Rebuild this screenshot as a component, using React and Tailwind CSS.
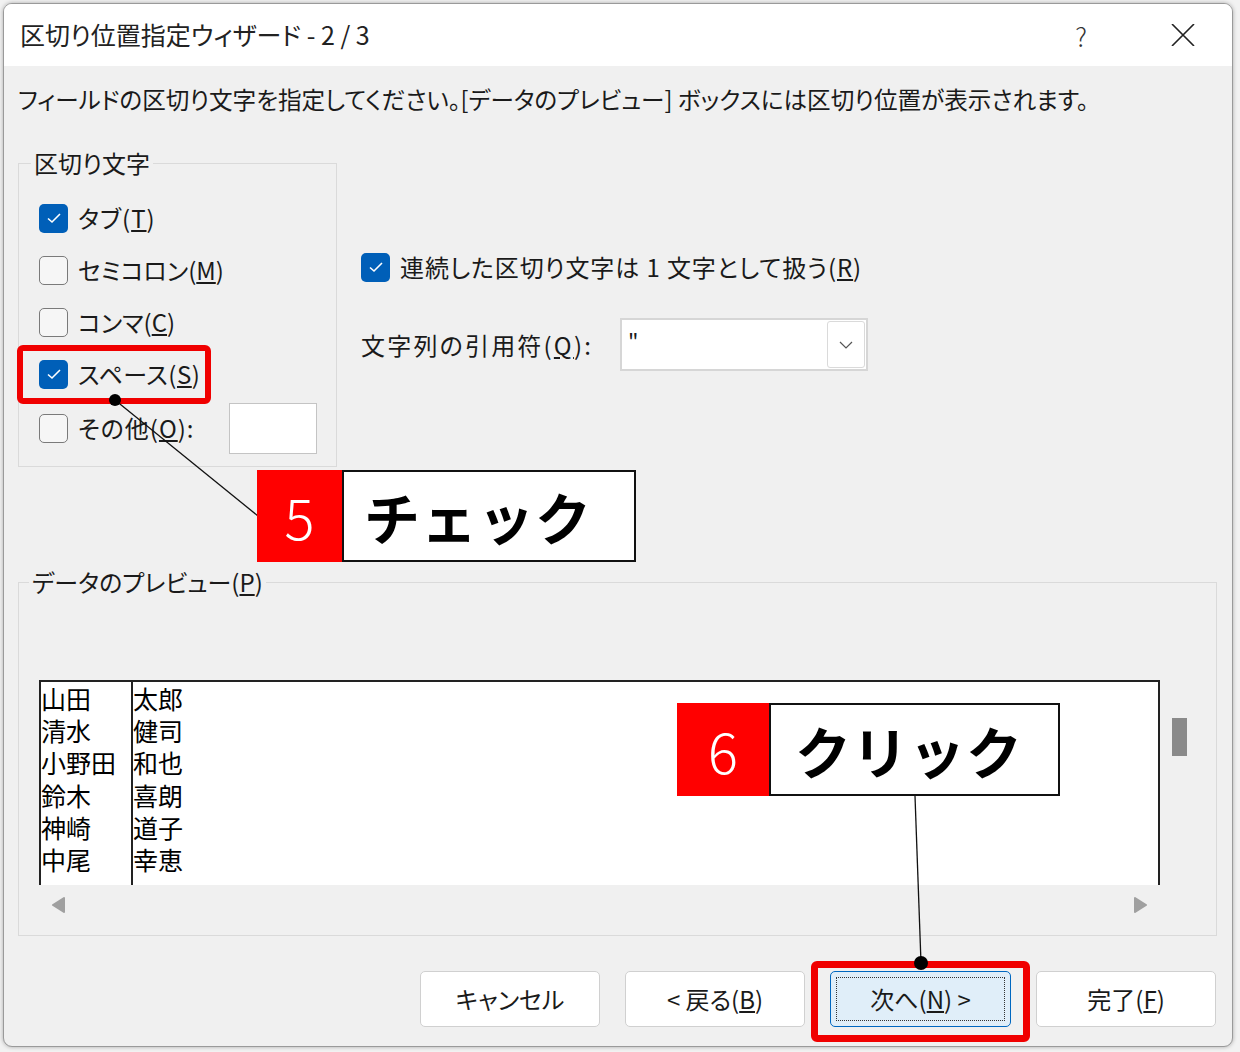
import React from "react";

const jp = "font-['Noto_Sans_CJK_JP',sans-serif] [font-feature-settings:'palt']";

function CheckBox({ checked }) {
  if (checked) {
    return (
      <span className="w-[29px] h-[29px] rounded-[5px] bg-[#005fb8] flex items-center justify-center shrink-0">
        <svg width="16" height="12" viewBox="0 0 16 12">
          <path d="M2 6.5 L6 10 L14 2" fill="none" stroke="white" strokeWidth="1.6" />
        </svg>
      </span>
    );
  }
  return <span className="w-[29px] h-[29px] rounded-[5px] border-[1.5px] border-[#7a7a7a] bg-[#f6f6f6] shrink-0" />;
}

function Row({ checked, children, h = "h-[52px]" }) {
  return (
    <div className={`${h} flex items-center gap-[10px] pl-[20px]`}>
      <CheckBox checked={checked} />
      {children}
    </div>
  );
}

const names = [
  ["山田", "太郎"],
  ["清水", "健司"],
  ["小野田", "和也"],
  ["鈴木", "喜朗"],
  ["神崎", "道子"],
  ["中尾", "幸恵"],
];

function Button({ children, primary }) {
  if (primary) {
    return (
      <div className="w-[181px] h-[56px] rounded-[5px] border border-[#0067c0] bg-[#e0eef9] p-[5px]">
        <div className="w-full h-full border border-dotted border-[#333] flex items-center justify-center text-[24px]">
          {children}
        </div>
      </div>
    );
  }
  return (
    <div className="w-[180px] h-[56px] rounded-[5px] border border-[#d0d0d0] bg-white flex items-center justify-center text-[24px]">
      {children}
    </div>
  );
}

export default function App() {
  return (
    <div className={`relative w-[1240px] h-[1052px] bg-[#f2f2f2] overflow-hidden text-[#1a1a1a] ${jp}`}>
      <div className="ml-[3px] mt-[3px] w-[1230px] h-[1044px] rounded-[9px] border border-[#9a9a9a] bg-[#f0f0f0] overflow-hidden flex flex-col shadow-[0_0_4px_rgba(0,0,0,0.3)]">
        {/* title bar */}
        <div className="h-[62px] bg-white flex items-center pl-[16px] pr-[37px] shrink-0">
          <span className="text-[25px] text-[#222]">区切り位置指定ウィザード - 2 / 3</span>
          <span className="ml-auto text-[26px] text-[#333] font-light">?</span>
          <svg className="ml-[84px]" width="24" height="22" viewBox="0 0 24 22">
            <path d="M1 0 L23 22 M23 0 L1 22" stroke="#222" strokeWidth="1.6" />
          </svg>
        </div>

        <div className="px-[14px]">
          <p className="pt-[16px] text-[23.6px] leading-[34px]">
            フィールドの区切り文字を指定してください。[データのプレビュー] ボックスには区切り位置が表示されます。
          </p>

          <div className="mt-[30px] flex">
            <fieldset className="w-[319px] border border-[#dadada]">
              <legend className="ml-[12px] px-[3px] text-[24px] leading-[34px]">区切り文字</legend>
              <div className="pt-[12px] pb-[10px] text-[24px]">
                <Row checked>
                  <span className="tracking-[1px]">タブ(<u>T</u>)</span>
                </Row>
                <Row>
                  <span>セミコロン(<u>M</u>)</span>
                </Row>
                <Row>
                  <span>コンマ(<u>C</u>)</span>
                </Row>
                <Row checked>
                  <span className="tracking-[0.5px]">スペース(<u>S</u>)</span>
                </Row>
                <Row h="h-[56px]">
                  <span className="w-[141px] tracking-[1px]">その他(<u>O</u>):</span>
                  <span className="w-[88px] h-[51px] bg-white border border-[#c4c4c4]" />
                </Row>
              </div>
            </fieldset>

            <div className="ml-[24px] pt-[101px] text-[24px]">
              <div className="h-[40px] flex items-center gap-[10px]">
                <CheckBox checked />
                <span className="tracking-[0.9px]">連続した区切り文字は 1 文字として扱う(<u>R</u>)</span>
              </div>
              <div className="mt-[31px] h-[53px] flex items-center">
                <span className="w-[259px] tracking-[2.2px]">文字列の引用符(<u>Q</u>):</span>
                <div className="w-[248px] h-[53px] bg-white border-2 border-[#d6d6d6] flex items-center">
                  <span className="pl-[6px] text-[22px] self-start mt-[4px]">"</span>
                  <div className="ml-auto mr-[1px] w-[38px] h-[47px] border border-[#dadada] rounded-[3px] flex items-center justify-center">
                    <svg width="14" height="8" viewBox="0 0 14 8">
                      <path d="M1 1 L7 7 L13 1" fill="none" stroke="#555" strokeWidth="1.2" />
                    </svg>
                  </div>
                </div>
              </div>
            </div>
          </div>

          {/* preview */}
          <fieldset className="mt-[98px] w-[1199px] border border-[#dadada]">
            <legend className="ml-[10px] px-[3px] text-[24px] leading-[34px]">データのプレビュー(<u>P</u>)</legend>
            <div className="mt-[81px] pl-[20px] pb-[11px] flex">
              <div className="w-[1121px]">
                <div className="h-[205px] bg-white border-t-2 border-l-2 border-r-2 border-[#222] flex text-[25px] leading-none text-black [font-feature-settings:normal]">
                  <div className="w-[92px] border-r-2 border-[#222]">
                    {names.map((n) => (
                      <div key={n[0]} className="h-[32.3px] flex items-center">{n[0]}</div>
                    ))}
                  </div>
                  <div>
                    {names.map((n) => (
                      <div key={n[1]} className="h-[32.3px] flex items-center">{n[1]}</div>
                    ))}
                  </div>
                </div>
                <div className="h-[39px] flex items-center justify-between pl-[12px] pr-[12px]">
                  <svg width="14" height="16" viewBox="0 0 14 16">
                    <path d="M13 1 L2 8 L13 15 Z" fill="#a0a0a0" stroke="#a0a0a0" strokeLinejoin="round" strokeWidth="2" />
                  </svg>
                  <svg width="14" height="16" viewBox="0 0 14 16">
                    <path d="M1 1 L12 8 L1 15 Z" fill="#a0a0a0" stroke="#a0a0a0" strokeLinejoin="round" strokeWidth="2" />
                  </svg>
                </div>
              </div>
              <div className="pl-[12px] pt-[38px]">
                <div className="w-[15px] h-[38px] bg-[#8a8a8a]" />
              </div>
            </div>
          </fieldset>

          <div className="mt-[35px] flex justify-end gap-[25px] pr-[2px]">
            <Button>キャンセル</Button>
            <Button>
              &lt; 戻る(<u>B</u>)
            </Button>
            <Button primary>
              次へ(<u>N</u>) &gt;
            </Button>
            <Button>
              完了(<u>F</u>)
            </Button>
          </div>
        </div>
      </div>

      {/* annotations */}
      <div className="absolute left-[17px] top-[345px] w-[194px] h-[59px] border-[6px] border-[#f00000] rounded-[6px]" />
      <div className="absolute left-[811px] top-[961px] w-[219px] h-[81px] border-[7px] border-[#f00000] rounded-[6px]" />

      <svg className="absolute left-0 top-0" width="1240" height="1052" viewBox="0 0 1240 1052">
        <line x1="115" y1="400" x2="258" y2="516" stroke="#111" strokeWidth="1.3" />
        <circle cx="115" cy="400" r="6" fill="#000" />
        <line x1="915" y1="796" x2="921" y2="963" stroke="#111" strokeWidth="1.3" />
        <circle cx="921" cy="963" r="7" fill="#000" />
      </svg>

      <div className="absolute left-[257px] top-[470px] flex h-[92px]">
        <div className="w-[85px] bg-[#ff0000] flex items-center justify-center text-white text-[56px] font-light">5</div>
        <div className="w-[294px] bg-white border-2 border-[#111] flex items-center pl-[20px] text-[56px] font-bold text-black [font-feature-settings:normal] tracking-[1px]">
          チェック
        </div>
      </div>
      <div className="absolute left-[677px] top-[703px] flex h-[93px]">
        <div className="w-[92px] bg-[#ff0000] flex items-center justify-center text-white text-[56px] font-light">6</div>
        <div className="w-[291px] bg-white border-2 border-[#111] flex items-center pl-[24px] text-[56px] font-bold text-black [font-feature-settings:normal] tracking-[1px]">
          クリック
        </div>
      </div>
    </div>
  );
}
